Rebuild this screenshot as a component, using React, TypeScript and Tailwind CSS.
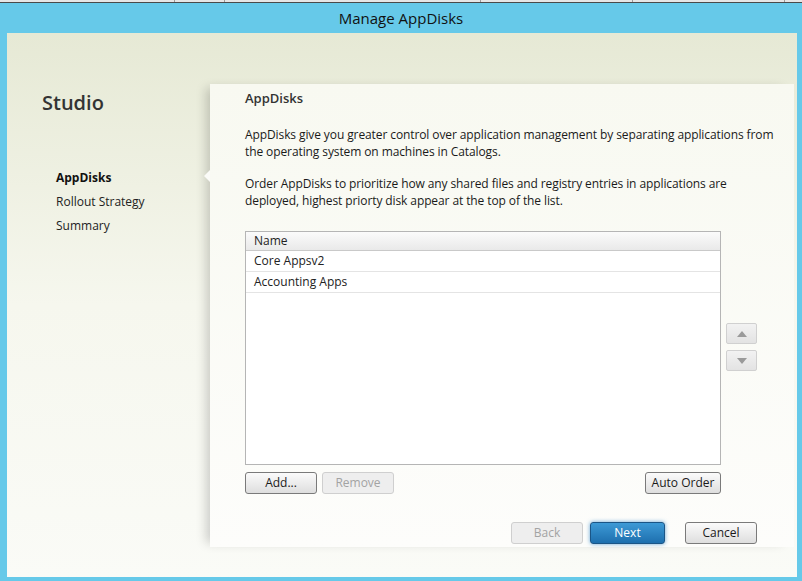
import React from "react";

const font = { fontFamily: '"Open Sans", "Noto Sans", sans-serif' };

const steps = [
  { label: "AppDisks", active: true },
  { label: "Rollout Strategy", active: false },
  { label: "Summary", active: false },
];

const disks = ["Core Appsv2", "Accounting Apps"];

const Btn = ({
  children,
  w,
  variant = "default",
}: {
  children: React.ReactNode;
  w: string;
  variant?: "default" | "disabled" | "primary";
}) => {
  const styles = {
    default:
      "bg-gradient-to-b from-[#fbfbfb] to-[#dedede] border-[#7a7a7a] text-[#1a1a1a]",
    disabled: "bg-[#eeeeee] border-[#cfcfcf] text-[#a3a3a3]",
    primary:
      "bg-gradient-to-b from-[#3d9ad6] to-[#1d6fae] border-[#1b5586] text-white shadow-[0_0_4px_rgba(40,130,200,0.7)]",
  };
  return (
    <button
      className={`${w} h-[22px] border rounded-[3px] text-[12px] leading-none flex items-center justify-center ${styles[variant]}`}
    >
      {children}
    </button>
  );
};

const ArrowBtn = ({ up }: { up: boolean }) => (
  <button className="w-[31px] h-[21px] border border-[#d0d0d0] rounded-[2px] bg-gradient-to-b from-[#f2f2f2] to-[#e3e3e3] flex items-center justify-center">
    <svg width="10" height="6" viewBox="0 0 10 6">
      {up ? (
        <path d="M5 0 L10 6 L0 6 Z" fill="#9a9a9a" />
      ) : (
        <path d="M0 0 L10 0 L5 6 Z" fill="#9a9a9a" />
      )}
    </svg>
  </button>
);

export default function App() {
  return (
    <div
      className="w-[802px] h-[581px] bg-[#66c9e9] flex flex-col overflow-hidden"
      style={font}
    >
      {/* taskbar strip above dialog */}
      <div className="h-[3px] bg-[#e6e6e6] border-b border-[#4a4a4a] flex">
        <div className="w-[175px] border-r border-[#9a9a9a]" />
        <div className="w-[50px] border-r border-[#9a9a9a]" />
        <div className="w-[256px] border-r border-[#9a9a9a]" />
        <div className="w-[152px] border-r border-[#9a9a9a]" />
        <div className="w-[152px] border-r border-[#9a9a9a]" />
      </div>

      {/* title bar */}
      <div className="h-[30px] flex items-center justify-center text-[15px] text-[#111]">
        Manage AppDisks
      </div>

      {/* body */}
      <div className="mx-[7px] mr-[5px] h-[544px] bg-gradient-to-b from-[#e6e9d5] via-[#f6f7ee] to-[#fafbf7] flex">
        {/* left nav */}
        <div className="w-[203px] flex flex-col">
          <div className="pl-[35px] pt-[56px] text-[20px] font-semibold text-[#333] leading-[28px]">
            Studio
          </div>
          <div className="pl-[49px] pt-[52px] flex flex-col gap-[7px]">
            {steps.map((s) => (
              <div
                key={s.label}
                className={`text-[12px] leading-[17px] ${
                  s.active ? "font-bold text-[#111]" : "text-[#222]"
                }`}
              >
                {s.label}
              </div>
            ))}
          </div>
        </div>

        {/* main panel */}
        <div className="relative mt-[51px] h-[463px] w-[584px] bg-gradient-to-b from-[#f8f9f1] to-[#fdfdfb] shadow-[-8px_0_10px_-4px_rgba(0,0,0,0.18)] pl-[35px] pt-[6px]">
          {/* pointer to active step */}
          <div className="absolute left-[-6px] top-[86px] w-0 h-0 border-y-[6px] border-y-transparent border-r-[6px] border-r-[#fbfbf8]" />

          <div className="text-[13px] font-semibold text-[#333] leading-[17px]">
            AppDisks
          </div>
          <p className="mt-[19px] text-[12px] leading-[17px] text-[#1a1a1a] w-[545px] tracking-[-0.1px]">
            AppDisks give you greater control over application management by
            separating applications from the operating system on machines in
            Catalogs.
          </p>
          <p className="mt-[15px] text-[12px] leading-[17px] text-[#1a1a1a] w-[520px] tracking-[-0.1px]">
            Order AppDisks to prioritize how any shared files and registry
            entries in applications are deployed, highest priorty disk appear at
            the top of the list.
          </p>

          <div className="mt-[22px] flex gap-[5px]">
            <div className="w-[476px] h-[234px] border border-[#b5b5b5] bg-white">
              <div className="h-[19px] bg-gradient-to-b from-[#fbfbfb] to-[#e9e9e9] border-b border-[#c9c9c9] pl-[8px] text-[12px] leading-[18px] text-[#222]">
                Name
              </div>
              {disks.map((d) => (
                <div
                  key={d}
                  className="h-[21px] border-b border-[#e4e4e4] pl-[8px] text-[12px] leading-[20px] text-[#222]"
                >
                  {d}
                </div>
              ))}
            </div>
            <div className="flex flex-col gap-[6px] pt-[92px]">
              <ArrowBtn up />
              <ArrowBtn up={false} />
            </div>
          </div>

          <div className="mt-[7px] w-[476px] flex items-center gap-[5px]">
            <Btn w="w-[72px]">Add...</Btn>
            <Btn w="w-[72px]" variant="disabled">
              Remove
            </Btn>
            <div className="flex-1" />
            <Btn w="w-[76px]">Auto Order</Btn>
          </div>

          <div className="mt-[28px] w-[512px] flex items-center justify-end">
            <Btn w="w-[72px]" variant="disabled">
              Back
            </Btn>
            <div className="w-[7px]" />
            <Btn w="w-[75px]" variant="primary">
              Next
            </Btn>
            <div className="w-[20px]" />
            <Btn w="w-[72px]">Cancel</Btn>
          </div>
        </div>
      </div>
    </div>
  );
}
